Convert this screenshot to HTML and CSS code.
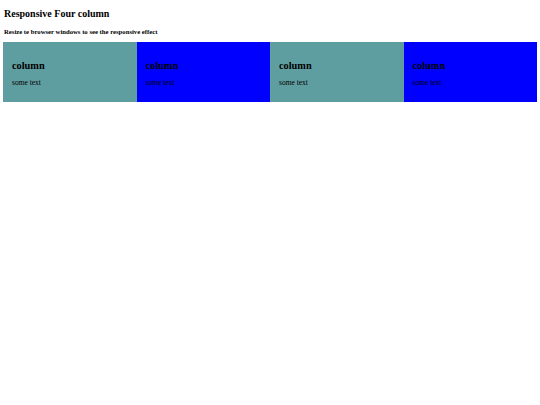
FILE: index.html
```html
<!DOCTYPE html>
<html>
<head>
<meta charset="utf-8">
<link rel="stylesheet" href="styles.css">
</head>
<body>
<h2 class="title">Responsive Four column</h2>
<h5 class="subtitle">Resize te browser windows to see the responsive effect</h5>
<div class="row">
  <div class="column teal"><h2 class="col-title">column</h2><p class="col-text">some text</p></div>
  <div class="column blue"><h2 class="col-title">column</h2><p class="col-text">some text</p></div>
  <div class="column teal"><h2 class="col-title">column</h2><p class="col-text">some text</p></div>
  <div class="column blue"><h2 class="col-title">column</h2><p class="col-text">some text</p></div>
</div>
</body>
</html>
```
FILE: styles.css
```css
html, body {
  background: #ffffff;
}
body {
  margin: 3px;
  font-family: "Liberation Serif", "Times New Roman", serif;
  color: #000;
}
.title {
  font-size: 10px;
  line-height: 12px;
  font-weight: bold;
  margin: 5px 0 0 1px;
}
.subtitle {
  font-size: 6.7px;
  line-height: 8px;
  font-weight: bold;
  margin: 8px 0 0 1px;
}
.row {
  display: flex;
  margin-top: 6px;
}
.column {
  flex: 1;
  padding: 18px 9px 15px 9px;
}
.teal { background: #5f9ea0; }
.blue { background: #0000ff; }
.col-title {
  font-size: 10.3px;
  line-height: 12px;
  font-weight: bold;
  margin: 0;
}
.col-text {
  font-size: 7.5px;
  line-height: 8px;
  margin: 7px 0 0 0;
}
```
